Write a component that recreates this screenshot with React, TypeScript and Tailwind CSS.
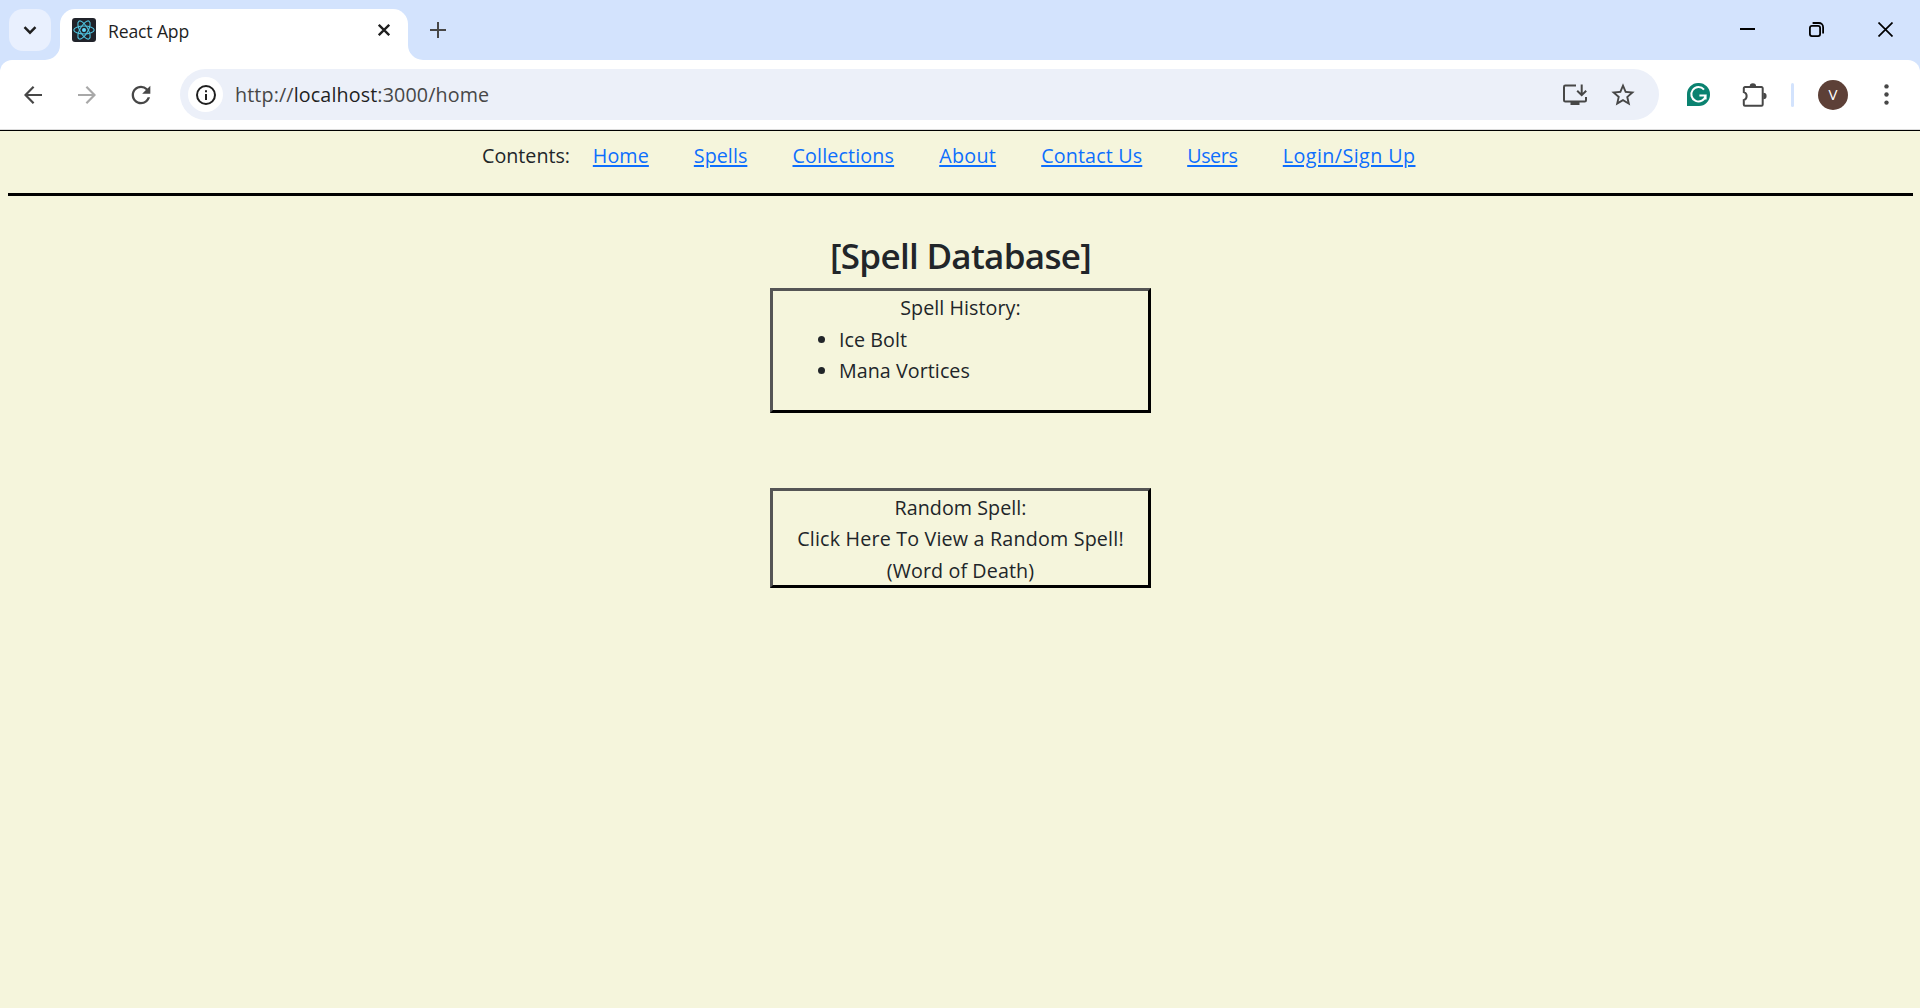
import React from "react";
import { MdRefresh, MdStarBorder } from "react-icons/md";

function Favicon() {
  return (
    <svg className="block size-6" viewBox="0 0 24 24" fill="none">
      <rect width="24" height="24" rx="3" fill="#20232a" />
      <g stroke="#4fc3df" strokeWidth="1.1">
        <ellipse cx="12" cy="12" rx="10.2" ry="4" />
        <ellipse cx="12" cy="12" rx="10.2" ry="4" transform="rotate(60 12 12)" />
        <ellipse cx="12" cy="12" rx="10.2" ry="4" transform="rotate(120 12 12)" />
      </g>
      <circle cx="12" cy="12" r="2" fill="#61dafb" />
    </svg>
  );
}

function TabStrip() {
  return (
    <div className="flex h-[60px] bg-[#d3e3fd]">
      <div className="ml-[9px] mt-[9px] flex size-[42px] items-center justify-center rounded-[14px] bg-[#e9f0fe]">
        <svg className="block size-[18px]" viewBox="0 0 18 18" fill="none" stroke="#1f1f1f" strokeWidth="2.4">
          <path d="M3.5 6.2 9 11.7l5.5-5.5" />
        </svg>
      </div>
      <svg className="ml-[-6px] mt-[45px] block h-[15px] w-[15px]" viewBox="0 0 15 15">
        <path d="M15 0v15H0A15 15 0 0 0 15 0z" fill="#fff" />
      </svg>
      <div className="mt-[9px] flex h-[51px] w-[348px] rounded-t-[15px] bg-white">
        <div className="ml-3 mt-[9px]"><Favicon /></div>
        <span className="ml-3 mt-2 w-[270px] whitespace-nowrap text-[17.6px] leading-7 tracking-[-0.15px] text-[#1f1f1f]">React App</span>
        <svg className="mt-[15px] block size-3 shrink-0" viewBox="0 0 12 12" stroke="#1f1f1f" strokeWidth="2.3">
          <path d="M.8.8l10.4 10.4M11.2.8.8 11.2" />
        </svg>
      </div>
      <svg className="mt-[45px] block h-[15px] w-[15px]" viewBox="0 0 15 15">
        <path d="M0 0v15h15A15 15 0 0 1 0 0z" fill="#fff" />
      </svg>
      <svg className="ml-[7px] mt-[22px] block size-4" viewBox="0 0 16 16" stroke="#474747" strokeWidth="2">
        <path d="M8 0v16M0 8h16" />
      </svg>
      <div className="ml-auto mr-[27px] mt-[22px] flex gap-[54px]">
        <svg className="block size-[15px]" viewBox="0 0 15 15" stroke="#000" strokeWidth="2">
          <path d="M0 7h15" />
        </svg>
        <svg className="block size-[15px]" viewBox="0 0 15 15" fill="none" stroke="#000" strokeWidth="1.8">
          <rect x=".9" y="3.9" width="10.2" height="10.2" rx="2" />
          <path d="M3.6 1h6.3a4.2 4.2 0 0 1 4.2 4.2v6.2" />
        </svg>
        <svg className="block size-[15px]" viewBox="0 0 15 15" stroke="#000" strokeWidth="1.7">
          <path d="M.5.5l14 14M14.5.5l-14 14" />
        </svg>
      </div>
    </div>
  );
}

function InstallIcon() {
  return (
    <svg className="block h-[22px] w-6 shrink-0" viewBox="0 0 24 22" fill="none" stroke="#474747" strokeWidth="2">
      <path d="M13 1.6H2.3A1.3 1.3 0 0 0 1 2.9v13.3a1.3 1.3 0 0 0 1.3 1.3h19.4a1.3 1.3 0 0 0 1.3-1.3V13" />
      <path d="M18.7.6v10.2M14.2 6.8l4.5 4.4 4.5-4.4" />
      <path d="M7.5 17.5h9V21h-9z" fill="#474747" stroke="none" />
    </svg>
  );
}

function Toolbar() {
  return (
    <div className="bg-[#d3e3fd]">
      <div className="flex h-[69px] items-center rounded-t-[12px] bg-white">
        <svg className="ml-6 block size-[18px]" viewBox="0 0 18 18" fill="none" stroke="#474747" strokeWidth="2.2">
          <path d="M18 9H1.8M9.6.8 1.5 9l8.1 8.2" />
        </svg>
        <svg className="ml-9 block size-[18px]" viewBox="0 0 18 18" fill="none" stroke="#a8a8a8" strokeWidth="2.2">
          <path d="M0 9h16.2M8.4.8 16.5 9l-8.1 8.2" />
        </svg>
        <MdRefresh className="ml-[31px] block size-[28px]" color="#474747" />
        <div className="ml-[25px] flex h-[51px] w-[1479px] items-center rounded-full bg-[#ecf0f9]">
          <div className="ml-2 flex size-[35px] items-center justify-center rounded-full bg-white">
            <svg className="block size-5" viewBox="0 0 20 20" fill="none">
              <circle cx="10" cy="10" r="9" stroke="#1f1f1f" strokeWidth="2" />
              <path d="M10 9v6M10 5.2v2.1" stroke="#1f1f1f" strokeWidth="2" />
            </svg>
          </div>
          <span className="ml-3 w-[1328px] whitespace-nowrap text-[19.7px] leading-7 tracking-[0.13px] text-[#474747]">
            http://<span className="text-[#1f1f1f]">localhost</span>:3000/home
          </span>
          <InstallIcon />
          <MdStarBorder className="ml-[22px] block size-[28px] shrink-0" color="#474747" />
        </div>
        <svg className="ml-7 block size-[23px]" viewBox="0 0 23 23" fill="none">
          <path d="M11.5 0A11.3 11.3 0 0 1 23 11.5 11.3 11.3 0 0 1 11.5 23H0V11.5A11.3 11.3 0 0 1 11.5 0z" fill="#0a8270" />
          <path d="M17 6.6A7.2 7.2 0 1 0 18.6 12.6H12.4M18.6 12.6v4" stroke="#fff" strokeWidth="2" />
        </svg>
        <svg className="ml-8 block h-6 w-[25px]" viewBox="0 0 25 24" fill="none">
          <path d="M3 4h16.5a1.2 1.2 0 0 1 1.2 1.2v16.3a1.2 1.2 0 0 1-1.2 1.2H3a1.2 1.2 0 0 1-1.2-1.2v-4.4c3.8-1.2 3.8-6.8 0-8V5.2A1.2 1.2 0 0 1 3 4z" stroke="#474747" strokeWidth="2" />
          <path d="M7.7 3.5a3.2 3.2 0 0 1 6.4 0zM21.3 9.7a3.3 3.3 0 0 1 0 6.6z" fill="#474747" />
        </svg>
        <div className="ml-6 h-6 w-[3px] rounded-full bg-[#d3e3fd]" />
        <div className="ml-6 flex size-[30px] items-center justify-center rounded-full bg-[#5d4037] text-[15px] text-white">V</div>
        <svg className="ml-[36px] block h-[21px] w-[5px]" viewBox="0 0 5 21" fill="#474747">
          <circle cx="2.5" cy="2.4" r="2.2" />
          <circle cx="2.5" cy="10.5" r="2.2" />
          <circle cx="2.5" cy="18.6" r="2.2" />
        </svg>
      </div>
    </div>
  );
}

const links = [
  { label: "Home", box: "w-[56px] tracking-[0.1px]" },
  { label: "Spells", box: "w-[53.7px] tracking-[0.05px]" },
  { label: "Collections", box: "w-[101.7px] tracking-[0.15px]" },
  { label: "About", box: "w-[57px] tracking-[0.3px]" },
  { label: "Contact Us", box: "w-[101px] tracking-[0.15px]" },
  { label: "Users", box: "w-[50.6px] tracking-[-0.4px]" },
  { label: "Login/Sign Up", box: "w-[133px] tracking-[0.43px]" },
];

function SiteNav() {
  return (
    <nav className="flex h-[62px] gap-[45px] whitespace-nowrap pl-[482px] pt-[9px]">
      <span className="-mr-[23.2px] w-[89px]">Contents:</span>
      {links.map((l) => (
        <span key={l.label} className={l.box}>
          <a className="underline decoration-2 underline-offset-2 text-[#0d6efd]">{l.label}</a>
        </span>
      ))}
    </nav>
  );
}

export default function App() {
  return (
    <div className="flex h-[1008px] w-[1920px] flex-col overflow-hidden bg-[#f5f5dc] font-['Open_Sans',sans-serif]">
      <TabStrip />
      <Toolbar />
      <div className="h-px bg-[#dcdcdc]" />
      <div className="h-px bg-black" />
      <div className="text-[19.7px] leading-[31.25px] text-[#212529]">
        <SiteNav />
        <div className="ml-2 mr-[7px] h-[3px] bg-black" />
        <main className="flex flex-col items-center pl-px">
          <h1 className="mt-[36px] h-[56px] whitespace-nowrap text-[35px] font-semibold leading-[48px] tracking-[-0.7px]">[Spell Database]</h1>
          <section className="h-[125px] w-[381px] border-[3px] border-b-black border-l-[#555] border-r-black border-t-[#555] pt-[1.4px]">
            <p className="text-center tracking-[0.05px]">Spell History:</p>
            <ul className="list-disc pl-[66px] tracking-[0.05px]">
              <li>Ice Bolt</li>
              <li>Mana Vortices</li>
            </ul>
          </section>
          <section className="mt-[75px] h-[100px] w-[381px] whitespace-nowrap border-[3px] border-b-black border-l-[#555] border-r-black border-t-[#555] pt-px text-center">
            <p className="tracking-[0.05px]">Random Spell:</p>
            <p className="tracking-[0.18px]">Click Here To View a Random Spell!</p>
            <p className="tracking-[0.1px]">(Word of Death)</p>
          </section>
        </main>
      </div>
    </div>
  );
}
